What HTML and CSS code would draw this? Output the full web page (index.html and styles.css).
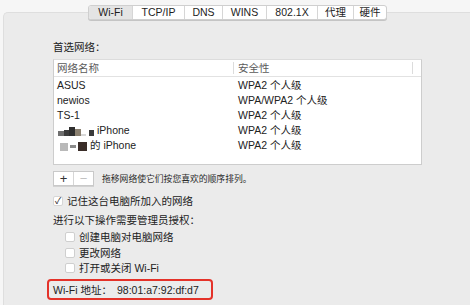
FILE: index.html
```html
<!DOCTYPE html>
<html lang="zh-CN">
<head>
<meta charset="utf-8">
<link rel="stylesheet" href="styles.css">
</head>
<body>
<div class="panel">
  <div class="tabs">
    <div class="tab sel t1">Wi-Fi</div>
    <div class="tab t2">TCP/IP</div>
    <div class="tab t3">DNS</div>
    <div class="tab t4">WINS</div>
    <div class="tab t5">802.1X</div>
    <div class="tab t6">代理</div>
    <div class="tab t7">硬件</div>
  </div>
  <div class="content">
    <div class="label-pref">首选网络：</div>
    <div class="table">
      <div class="thead">
        <div class="th c1">网络名称</div>
        <div class="th c2">安全性</div>
        <div class="th c3"></div>
      </div>
      <div class="row"><div class="c1">ASUS</div><div class="c2">WPA2 个人级</div></div>
      <div class="row"><div class="c1">newios</div><div class="c2">WPA/WPA2 个人级</div></div>
      <div class="row"><div class="c1">TS-1</div><div class="c2">WPA2 个人级</div></div>
      <div class="row"><div class="c1"><span class="mosaic m1"><i class="b1"></i><i class="b2"></i><i class="b3"></i><i class="b4"></i><i class="b5"></i><i class="b6"></i></span> iPhone</div><div class="c2">WPA2 个人级</div></div>
      <div class="row"><div class="c1"><span class="mosaic m2"><i class="b7"></i><i class="b8"></i><i class="b9"></i></span> 的 iPhone</div><div class="c2">WPA2 个人级</div></div>
    </div>
    <div class="btnrow">
      <div class="btns"><span class="btn plus">+</span><span class="btn minus">−</span></div>
      <span class="hint">拖移网络使它们按您喜欢的顺序排列。</span>
    </div>
    <div class="opt main"><span class="cb checked">✓</span><span>记住这台电脑所加入的网络</span></div>
    <div class="admin">进行以下操作需要管理员授权：</div>
    <div class="opt sub o1"><span class="cb"></span><span>创建电脑对电脑网络</span></div>
    <div class="opt sub o2"><span class="cb"></span><span>更改网络</span></div>
    <div class="opt sub o3"><span class="cb"></span><span>打开或关闭 Wi-Fi</span></div>
    <div class="addr"><span class="addr-label">Wi-Fi 地址：</span><span class="addr-val">98:01:a7:92:df:d7</span></div>
  </div>
</div>
</body>
</html>
```
FILE: styles.css
```css
html, body {
  margin: 0;
  padding: 0;
  width: 470px;
  height: 305px;
  overflow: hidden;
  background: #f6f6f6;
  font-family: "Liberation Sans", "Noto Sans CJK SC", sans-serif;
  font-size: 10.5px;
  color: #222;
}
.panel {
  margin: 12px 0 0 3px;
  height: 300px;
  background: #ebebeb;
  border-top: 1px solid #dedede;
  border-left: 1px solid #dedede;
  border-top-left-radius: 5px;
}
.tabs {
  display: flex;
  margin: -8px 0 0 84px;
  width: 299px;
  height: 15px;
  background: #fff;
  border: 1px solid #cfcfcf;
  border-radius: 3px;
  box-shadow: 0 1px 0 #c4c4c4;
  box-sizing: border-box;
  overflow: hidden;
}
.tab {
  display: flex;
  align-items: center;
  justify-content: center;
  font-size: 10.5px;
  line-height: 13px;
  border-left: 1px solid #d6d6d6;
  color: #1d1d1d;
}
.tab.t1 { border-left: none; width: 43px; }
.tab.t2 { width: 51px; }
.tab.t3 { width: 37px; }
.tab.t4 { width: 43px; }
.tab.t5 { width: 50px; }
.tab.t6 { width: 35px; }
.tab.t7 { flex: 1; }
.tab.sel { background: #e4e4e4; }
.content {
  padding-left: 49px;
  display: flex;
  flex-direction: column;
  align-items: flex-start;
}
.label-pref {
  margin-top: 20px;
  line-height: 14px;
  height: 14px;
}
.table {
  margin-top: 5px;
  width: 369px;
  height: 106px;
  box-sizing: border-box;
  background: #fff;
  border: 1px solid #cdcdcd;
  border-top-color: #dcdcdc;
}
.thead {
  display: flex;
  height: 16px;
  align-items: center;
  border-bottom: 1px solid #e2e2e2;
  color: #5a5a5a;
}
.thead .th { height: 16px; line-height: 16px; }
.thead .c2, .thead .c3 { position: relative; }
.thead .c2::before, .thead .c3::before {
  content: "";
  position: absolute;
  left: 0;
  top: 2px;
  height: 12px;
  border-left: 1px solid #dcdcdc;
}
.c1 { width: 176px; padding-left: 3px; white-space: nowrap; display: flex; align-items: center; }
.c2 { width: 179px; padding-left: 5px; box-sizing: border-box; white-space: nowrap; }
.c3 { flex: 1; }
.row {
  display: flex;
  height: 15px;
  line-height: 15px;
  align-items: center;
}
.row:first-of-type { margin-top: 1px; }
.thead + .row { margin-top: 1px; }
.mosaic {
  display: inline-flex;
  align-items: flex-end;
  height: 10px;
  margin-right: 3px;
}
.mosaic i { display: inline-block; }
.m1 { margin-left: 1px; }
.b1 { width: 6px; height: 5px; background: #6f6f6f; }
.b2 { width: 5px; height: 6px; background: #3c3c3c; }
.b3 { width: 6px; height: 9px; background: #2f2f2f; }
.b4 { width: 6px; height: 7px; background: #8a8070; }
.b5 { width: 5px; height: 2px; background: #d8d8d8; }
.b6 { width: 5px; height: 6px; background: #3a3a3a; margin-left: 3px; }
.m2 { margin-left: 3px; gap: 2px; }
.b7 { width: 8px; height: 8px; background: #b9b9b9; }
.b8 { width: 6px; height: 3px; background: #8b8b8b; margin-bottom: 3px; }
.b9 { width: 9px; height: 9px; background: #3a2d28; }
.btnrow {
  margin-top: 6px;
  display: flex;
  align-items: center;
  height: 15px;
}
.btns {
  display: flex;
  border: 1px solid #c9c9c9;
  background: #fff;
  height: 15px;
  box-sizing: border-box;
  box-shadow: 0 1px 0 #d2d2d2;
}
.btn {
  width: 19px;
  display: flex;
  align-items: center;
  justify-content: center;
  font-size: 13px;
  line-height: 13px;
  color: #333;
}
.btn.minus { border-left: 1px solid #d6d6d6; color: #c2c2c2; }
.hint {
  margin-left: 8px;
  font-size: 8.8px;
  color: #2a2a2a;
}
.opt {
  display: flex;
  align-items: center;
  height: 14px;
  line-height: 14px;
}
.opt.main { margin-top: 8px; }
.cb {
  width: 10px;
  height: 10px;
  box-sizing: border-box;
  background: #fff;
  border: 1px solid #cfcfcf;
  border-radius: 2px;
  margin-right: 4px;
  display: flex;
  align-items: center;
  justify-content: center;
  font-size: 9px;
  line-height: 9px;
  color: #222;
}
.cb.checked { border-color: #d6d6d6; }
.admin {
  margin-top: 5px;
  height: 14px;
  line-height: 14px;
}
.opt.sub { margin-left: 12px; }
.opt.o1 { margin-top: 3px; }
.opt.o2 { margin-top: 2px; }
.opt.o3 { margin-top: 1px; }
.addr {
  margin: 4px 0 0 -6px;
  width: 166px;
  height: 21px;
  box-sizing: border-box;
  border: 2px solid #e43229;
  border-radius: 4px;
  padding-left: 4px;
  display: flex;
  align-items: center;
}
.addr-label { width: 64px; white-space: nowrap; }
```
